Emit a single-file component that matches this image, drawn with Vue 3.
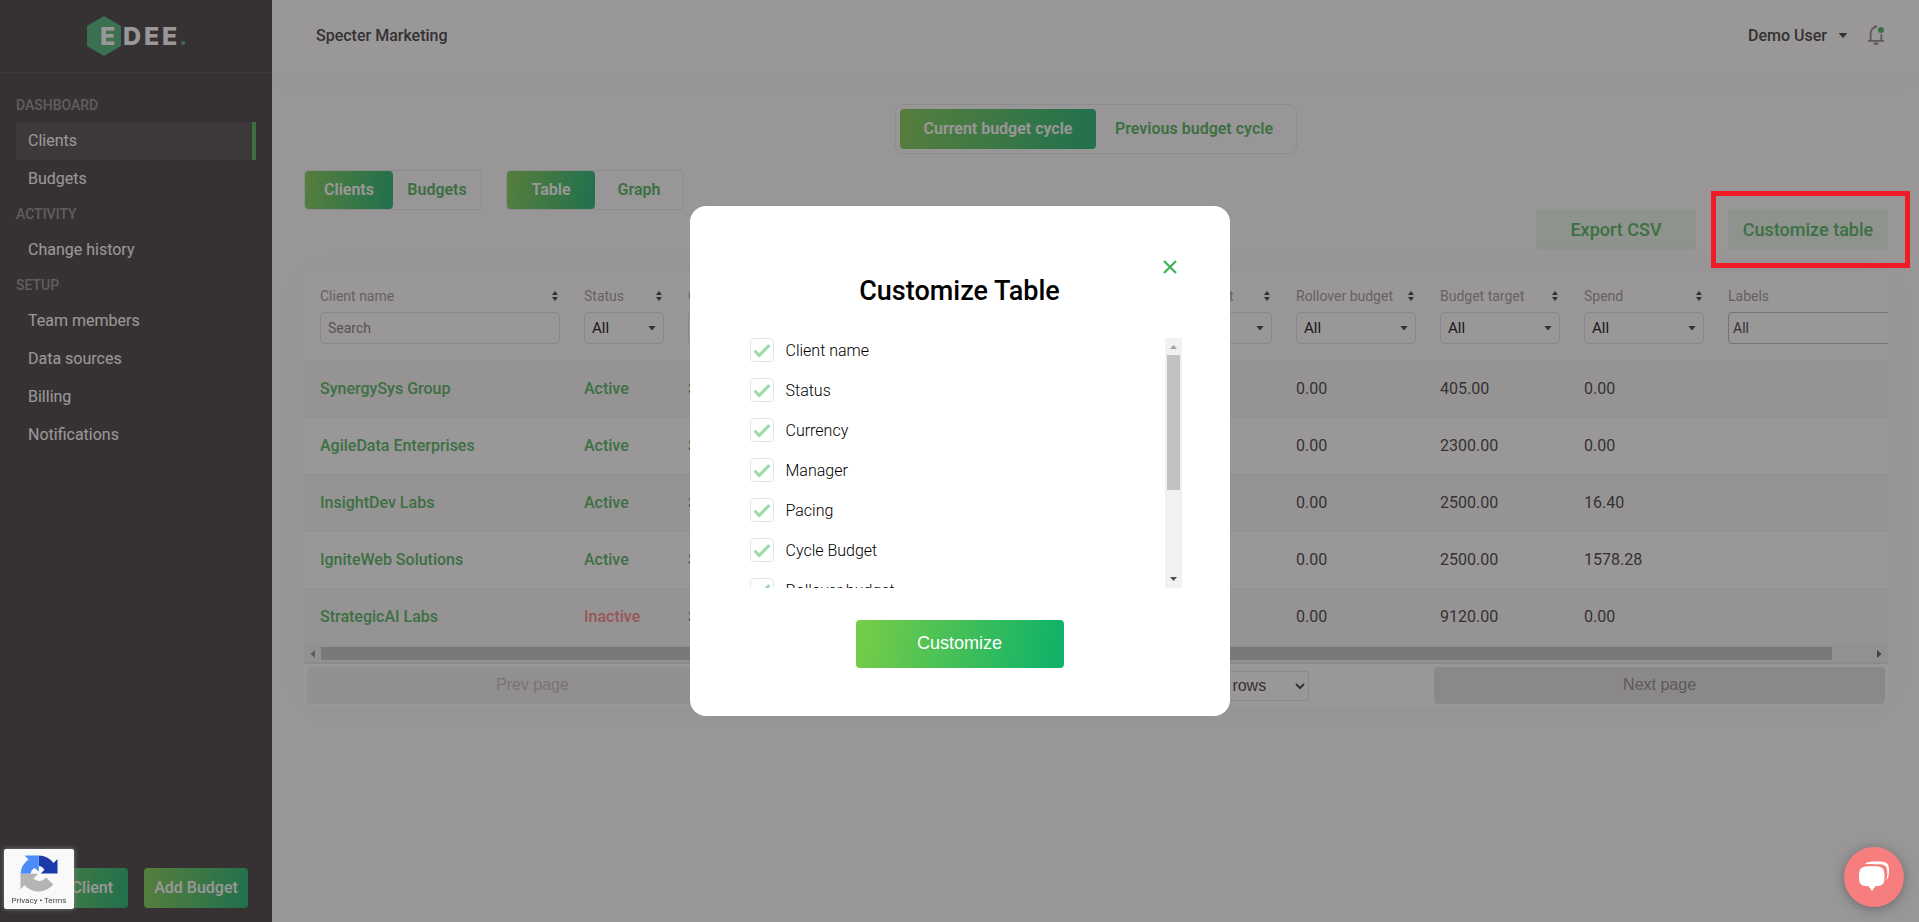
<template>
  <div class="app-shell">
    <aside class="sidebar">
      <div class="sidebar-brand">
        <svg class="brand-logo" viewBox="0 0 98 40" role="img" aria-label="EDEE.">
          <polygon points="17,0 34,10 34,30 17,40 0,30 0,10" fill="#41b36e" />
          <g fill="#ffffff" class="brand-text">
            <text x="13" y="29">E</text>
            <text x="36" y="29">D</text>
            <text x="57" y="29">E</text>
            <text x="75" y="29">E</text>
          </g>
          <circle cx="96" cy="27" r="2" fill="#41b36e" />
        </svg>
      </div>

      <nav class="sidebar-nav" aria-label="Main">
        <template v-for="group in menu" :key="group.title">
          <h2 class="nav-title">{{ group.title }}</h2>
          <a
            v-for="item in group.items"
            :key="item"
            href="#"
            class="nav-link"
            :class="{ active: item === activePage }"
            @click.prevent="activePage = item"
          >{{ item }}</a>
        </template>
      </nav>

      <div class="sidebar-actions">
        <button type="button" class="gradient-btn action-btn">Add Client</button>
        <button type="button" class="gradient-btn action-btn">Add Budget</button>
      </div>
    </aside>

    <div class="page">
      <header class="topbar">
        <span class="company">Specter Marketing</span>
        <button type="button" class="user-menu">
          Demo User
          <svg class="caret" viewBox="0 0 8 5"><path d="M0.5 0h7a.5.5 0 0 1 .3.8L4.5 4.6a.7.7 0 0 1-1 0L.2.8A.5.5 0 0 1 .5 0z" fill="#333333" /></svg>
        </button>
        <button type="button" class="bell-btn" aria-label="Notifications">
          <svg viewBox="0 0 18 20" width="18" height="20" fill="none">
            <path d="M3.6 15.2V9.6C3.6 5.6 5.4 2.6 8.8 2.2" stroke="#868484" stroke-width="1.8" />
            <path d="M14.3 9.2v6" stroke="#868484" stroke-width="1.8" />
            <path d="M1 15.9h16" stroke="#868484" stroke-width="1.8" />
            <circle cx="8.8" cy="1.6" r="1.4" fill="#868484" />
            <path d="M6.4 17.4h5a2.5 2.5 0 0 1-5 0z" fill="#868484" />
            <circle cx="14" cy="5" r="3" fill="#43b154" />
          </svg>
        </button>
      </header>

      <main class="content">
        <div class="cycle-switch">
          <button
            v-for="cycle in cycles"
            :key="cycle"
            type="button"
            class="cycle-btn"
            :class="{ selected: cycle === activeCycle }"
            @click="activeCycle = cycle"
          >{{ cycle }}</button>
        </div>

        <div class="view-row">
          <div v-for="group in viewGroups" :key="group.selected" class="view-switch">
            <button
              v-for="option in group.options"
              :key="option"
              type="button"
              class="view-btn"
              :class="{ selected: option === group.selected }"
              @click="group.selected = option"
            >{{ option }}</button>
          </div>
        </div>

        <div class="table-actions">
          <button type="button" class="soft-btn">Export CSV</button>
          <div class="highlighted">
            <button type="button" class="soft-btn" @click="isModalOpen = true">Customize table</button>
          </div>
        </div>

        <section class="table-card">
          <div class="table-scroll">
            <table class="clients-table">
              <colgroup>
                <col v-for="col in columns" :key="col.label" :class="col.size" />
              </colgroup>
              <thead>
                <tr>
                  <th v-for="col in columns" :key="col.label" scope="col">
                    <div class="th-top">
                      <label :for="col.key">{{ col.label }}</label>
                      <svg v-if="col.key !== 'labels'" class="sort-icon" viewBox="0 0 6 10">
                        <path d="M3 0l3 4H0zM3 10l3-4H0z" fill="#333333" />
                      </svg>
                    </div>
                    <input v-if="col.key === 'name'" :id="col.key" class="filter" type="text" placeholder="Search" />
                    <div v-else class="select-wrap">
                      <select :id="col.key" class="filter" :class="{ 'filter-labels': col.key === 'labels' }">
                        <option>All</option>
                      </select>
                      <svg v-if="col.key !== 'labels'" class="select-caret" viewBox="0 0 8 5"><path d="M0.3 0h7.4L4 4.6z" fill="#333333" /></svg>
                    </div>
                  </th>
                </tr>
              </thead>
              <tbody>
                <tr v-for="row in rows" :key="row.name">
                  <td><a href="#" class="client-link" @click.prevent>{{ row.name }}</a></td>
                  <td><span class="status" :class="{ inactive: row.status === 'Inactive' }">{{ row.status }}</span></td>
                  <td>$</td>
                  <td></td>
                  <td></td>
                  <td></td>
                  <td>{{ row.rollover }}</td>
                  <td>{{ row.target }}</td>
                  <td>{{ row.spend }}</td>
                  <td></td>
                </tr>
              </tbody>
            </table>
          </div>
          <div class="h-scrollbar" aria-hidden="true">
            <svg viewBox="0 0 17 17"><path d="M11 5v8L6.500 9z" fill="#8a8a8a" /></svg>
            <div class="h-track"><div class="h-thumb"></div></div>
            <svg viewBox="0 0 17 17"><path d="M6 5v8l4.500-4z" fill="#505050" /></svg>
          </div>

          <div class="pagination">
            <button type="button" class="page-btn" disabled>Prev page</button>
            <div class="page-center">
              <span>Page 1 of 2</span>
              <select class="rows-select" aria-label="Rows per page">
                <option>10 rows</option>
                <option>20 rows</option>
              </select>
            </div>
            <button type="button" class="page-btn">Next page</button>
          </div>
        </section>
      </main>
    </div>

    <div v-if="isModalOpen" class="backdrop" @click.self="isModalOpen = false">
      <div class="modal" role="dialog" aria-modal="true" aria-labelledby="modal-title">
        <button type="button" class="close-btn" aria-label="Close" @click="isModalOpen = false">
          <svg viewBox="0 0 14 14" width="14" height="14"><path d="M1 1l12 12M13 1L1 13" stroke="#43b154" stroke-width="2.200" /></svg>
        </button>
        <h1 id="modal-title" class="modal-title">Customize Table</h1>
        <div class="option-area">
          <ul class="option-list">
            <li v-for="option in tableOptions" :key="option.label">
              <label class="option">
                <input v-model="option.checked" type="checkbox" />
                {{ option.label }}
              </label>
            </li>
          </ul>
          <div class="v-scrollbar" aria-hidden="true">
            <svg viewBox="0 0 17 17"><path d="M5 11h7L8.500 7z" fill="#a3a3a3" /></svg>
            <div class="v-track"><div class="v-thumb"></div></div>
            <svg viewBox="0 0 17 17"><path d="M5 6h7l-3.500 4z" fill="#505050" /></svg>
          </div>
        </div>
        <button type="button" class="gradient-btn submit-btn" @click="isModalOpen = false">Customize</button>
      </div>
    </div>

    <div class="captcha-badge">
      <svg viewBox="0 0 38 38" width="38" height="38">
        <path d="M37.500 18.500V4l-4 4A19 19 0 0 0 18.800 0.500v10.300a8.500 8.500 0 0 1 5.700 4l-3.800 3.700z" fill="#1c3aa9" />
        <path d="M18.800 0.500H4.500l4 4A19 19 0 0 0 .500 18.700h10.200c.2-2.800 1.600-4.600 4-5.800l4.100 3.700z" fill="#4a8df6" />
        <path d="M.500 18.700v15.600l4-4a18.800 18.800 0 0 0 28.700-.9l-7.200-6.900a8.500 8.500 0 0 1-12.500 1.300l4.500-5.100z" fill="#b4b4b4" />
      </svg>
      <div class="captcha-links"><a href="#">Privacy</a> • <a href="#">Terms</a></div>
    </div>

    <button type="button" class="chat-btn" aria-label="Open chat">
      <svg viewBox="0 0 32 30" width="32" height="30">
        <path d="M7 3.200C9 .9 12 .6 19 .6c9 0 12 1.200 12 8.400 0 5-.6 8-2.700 10.300 1-3 1-5 1-8.300 0-6.300-3-7.600-10-7.700C14 3.200 11 2.900 7 3.200z" fill="#ffffff" />
        <path d="M14 5.200c10 0 12.500.8 12.500 10.300 0 7.500-1.600 9.400-9 9.800L14 30l-3.500-4.700C2.600 24.900 1 23 1 15.500 1 6 4 5.200 14 5.200z" fill="#ffffff" />
      </svg>
    </button>
  </div>
</template>

<script setup>
import { reactive, ref } from 'vue'

const isModalOpen = ref(true)
const activePage = ref('Clients')
const activeCycle = ref('Current budget cycle')

const cycles = ['Current budget cycle', 'Previous budget cycle']

const menu = [
  { title: 'DASHBOARD', items: ['Clients', 'Budgets'] },
  { title: 'ACTIVITY', items: ['Change history'] },
  { title: 'SETUP', items: ['Team members', 'Data sources', 'Billing', 'Notifications'] },
]

const viewGroups = reactive([
  { selected: 'Clients', options: ['Clients', 'Budgets'] },
  { selected: 'Table', options: ['Table', 'Graph'] },
])

const columns = [
  { key: 'name', label: 'Client name', size: 'col-name' },
  { key: 'status', label: 'Status', size: 'col-small' },
  { key: 'currency', label: 'Currency', size: 'col-small' },
  { key: 'manager', label: 'Manager', size: 'col-large' },
  { key: 'pacing', label: 'Pacing', size: 'col-medium' },
  { key: 'cycle', label: 'Cycle Budget', size: 'col-medium' },
  { key: 'rollover', label: 'Rollover budget', size: 'col-medium' },
  { key: 'target', label: 'Budget target', size: 'col-medium' },
  { key: 'spend', label: 'Spend', size: 'col-medium' },
  { key: 'labels', label: 'Labels', size: 'col-large' },
]

const rows = [
  { name: 'SynergySys Group', status: 'Active', rollover: '0.00', target: '405.00', spend: '0.00' },
  { name: 'AgileData Enterprises', status: 'Active', rollover: '0.00', target: '2300.00', spend: '0.00' },
  { name: 'InsightDev Labs', status: 'Active', rollover: '0.00', target: '2500.00', spend: '16.40' },
  { name: 'IgniteWeb Solutions', status: 'Active', rollover: '0.00', target: '2500.00', spend: '1578.28' },
  { name: 'StrategicAI Labs', status: 'Inactive', rollover: '0.00', target: '9120.00', spend: '0.00' },
]

// One option per table column
const tableOptions = reactive(columns.map(col => ({ label: col.label, checked: true })))
</script>

<style>
body {
  margin: 0;
  background: #fdfdfd;
}
</style>

<style scoped>
.app-shell {
  display: flex;
  min-height: 100vh;
  font-family: Roboto, "Liberation Sans", sans-serif;
  font-size: 16px;
  color: #333333;
}

.app-shell *,
.app-shell *::before,
.app-shell *::after {
  box-sizing: border-box;
}

button,
input,
select {
  font-family: inherit;
  font-size: inherit;
  color: inherit;
}

button {
  border: none;
  background: none;
  padding: 0 0 2px;
  cursor: pointer;
}

a {
  text-decoration: none;
}

.gradient-btn,
.selected {
  background: linear-gradient(100deg, #74cc49 4%, #12b368 94%);
  color: #ffffff;
  border-radius: 4px;
}

/* Sidebar */
.sidebar {
  width: 272px;
  flex-shrink: 0;
  display: flex;
  flex-direction: column;
  background: #373435;
}

.sidebar-brand {
  height: 73px;
  display: flex;
  align-items: center;
  justify-content: center;
  border-bottom: 1px solid #474445;
}

.brand-logo {
  width: 98px;
  height: 40px;
}

.brand-text {
  font-family: Inter, sans-serif;
  font-size: 25px;
  font-weight: 800;
}

.sidebar-nav {
  flex: 1;
  display: flex;
  flex-direction: column;
  padding: 16px;
}

.nav-title {
  margin: 0;
  font-size: 14px;
  line-height: 33px;
  font-weight: 500;
  color: #8c8a8a;
}

.nav-link {
  padding-left: 12px;
  line-height: 38px;
  color: #ffffff;
}

.nav-link.active {
  background: #454242;
  border-right: 4px solid #43b154;
}

.sidebar-actions {
  display: flex;
  gap: 16px;
  padding: 0 24px 14px;
}

.action-btn {
  flex: 1;
  height: 40px;
  font-weight: 500;
}

/* Page */
.page {
  flex: 1;
  min-width: 0;
}

.topbar {
  height: 72px;
  display: flex;
  align-items: center;
  padding: 0 34px 0 44px;
  background: #ffffff;
  box-shadow: 0 8px 32px rgba(0, 0, 0, 0.03);
  font-weight: 500;
}

.company {
  flex: 1;
  padding-bottom: 2px;
}

.user-menu {
  display: flex;
  align-items: center;
  gap: 12px;
  margin-right: 20px;
  font-weight: 500;
}

.caret {
  width: 8px;
  height: 5px;
}

.bell-btn {
  display: flex;
}

.content {
  display: flex;
  flex-direction: column;
  padding: 32px 31px 32px 32px;
}

.cycle-switch {
  align-self: center;
  display: flex;
  padding: 4px;
  border: 1px solid #e6e6e6;
  border-radius: 8px;
}

.cycle-btn {
  width: 196px;
  height: 40px;
  font-weight: 600;
  color: #43b154;
}

.view-row {
  display: flex;
  gap: 24px;
  margin-top: 16px;
}

.view-switch {
  display: flex;
  border: 1px solid #e6e6e6;
  border-radius: 4px;
}

.view-btn {
  width: 88px;
  height: 38px;
  font-weight: 600;
  color: #43b154;
}

.cycle-btn.selected,
.view-btn.selected {
  color: #ffffff;
}

.table-actions {
  display: flex;
  justify-content: flex-end;
  gap: 32px;
}

.soft-btn {
  width: 160px;
  height: 40px;
  border-radius: 4px;
  background: #e6f6e8;
  color: #43b154;
  font-size: 18px;
  font-weight: 500;
}

.highlighted {
  position: relative;
}

/* Frame that points at the button, drawn over the backdrop */
.highlighted::after {
  content: '';
  position: absolute;
  inset: -19px -22px -18px -17px;
  border: 5px solid #ee1c24;
  z-index: 20;
  pointer-events: none;
}

/* Table */
.table-card {
  margin-top: 23px;
  background: #ffffff;
  border-radius: 8px;
  box-shadow: 0 0 48px rgba(0, 0, 0, 0.04);
}

.table-scroll {
  overflow: hidden;
}

.clients-table {
  width: 1628px;
  table-layout: fixed;
  border-collapse: collapse;
}

.col-name {
  width: 268px;
}

.col-small {
  width: 104px;
}

.col-medium {
  width: 144px;
}

.col-large {
  width: 216px;
}

th,
td {
  padding: 0 12px;
  text-align: left;
  font-weight: 400;
}

th:first-child,
td:first-child {
  padding-left: 16px;
}

th {
  height: 87px;
  padding-top: 11px;
  vertical-align: top;
}

tbody tr:nth-child(odd) {
  background: #f7f7f7;
}

td {
  height: 57px;
  border-top: 1px solid #f1f1f1;
}

.th-top {
  display: flex;
  align-items: center;
  justify-content: space-between;
  height: 24px;
  margin-bottom: 4px;
  font-size: 14px;
  white-space: nowrap;
  color: #939292;
}

.sort-icon {
  width: 6px;
  height: 10px;
  margin-right: 2px;
}

.filter {
  display: block;
  width: 100%;
  height: 32px;
  padding: 0 7px;
  border: 1px solid #e0e0e0;
  border-radius: 4px;
  background: #ffffff;
  font-size: 15px;
  color: #000000;
  appearance: none;
}

input.filter {
  font-size: 14px;
}

.filter::placeholder {
  color: #757575;
}

.filter-labels {
  padding: 0 4px;
  border-color: #b6b6b6;
  color: #333333;
  font-size: 14px;
}

.select-wrap {
  position: relative;
}

.select-caret {
  position: absolute;
  right: 8px;
  top: 14px;
  width: 8px;
  height: 5px;
  pointer-events: none;
}

.client-link {
  font-weight: 500;
  color: #43b154;
}

.status {
  font-weight: 500;
  color: #43b154;
}

.status.inactive {
  color: #f67e7e;
}

.h-scrollbar {
  display: flex;
  align-items: center;
  height: 19px;
  background: #f1f1f1;
  border-bottom: 2px solid #e4e4e4;
}

.h-scrollbar svg,
.v-scrollbar svg {
  width: 17px;
  height: 17px;
  flex-shrink: 0;
}

.h-track {
  flex: 1;
}

.h-thumb {
  width: 97.5%;
  height: 13px;
  background: #c1c1c1;
}

.pagination {
  display: grid;
  grid-template-columns: 2fr 3fr 2fr;
  padding: 3px;
}

.page-btn {
  height: 37px;
  border-radius: 4px;
  background: #e1e1e1;
  color: #828282;
  font-family: "Liberation Sans", sans-serif;
}

.page-btn:disabled {
  background: #efefef;
  color: #b8b8b8;
  cursor: default;
}

.page-center {
  display: flex;
  align-items: center;
  justify-content: space-between;
  padding: 0 125px;
  font-family: "Liberation Sans", sans-serif;
}

.rows-select {
  height: 30px;
  width: 104px;
  padding: 0;
  border: 1px solid #e0e0e0;
  border-radius: 3px;
  background: #ffffff;
}

/* Modal */
.backdrop {
  position: fixed;
  inset: 0;
  display: grid;
  place-items: center;
  background: rgba(53, 48, 49, 0.5);
  z-index: 10;
}

.modal {
  position: relative;
  width: 540px;
  display: flex;
  flex-direction: column;
  padding: 64px 48px 48px 60px;
  background: #ffffff;
  border-radius: 16px;
}

.close-btn {
  position: absolute;
  top: 54px;
  right: 53px;
  display: flex;
}

.modal-title {
  margin: 0 12px 26px 0;
  text-align: center;
  font-size: 27px;
  line-height: 42px;
  font-weight: 500;
  color: #000000;
}

.option-area {
  display: flex;
  height: 250px;
}

.option-list {
  flex: 1;
  margin: 0;
  padding: 0;
  list-style: none;
  overflow: hidden;
}

.option {
  display: flex;
  align-items: center;
  gap: 12px;
  margin-bottom: 16px;
  height: 24px;
  font-weight: 300;
  color: #000000;
  cursor: pointer;
}

.option input {
  appearance: none;
  display: flex;
  justify-content: center;
  width: 24px;
  height: 24px;
  margin: 0;
  border: 1px solid #e4e4e4;
  border-radius: 4px;
}

.option input:checked::after {
  content: '';
  width: 8px;
  height: 16px;
  margin-top: 2px;
  border: solid #a0d8a8;
  border-width: 0 3px 3px 0;
  transform: rotate(45deg);
}

.v-scrollbar {
  display: flex;
  flex-direction: column;
  align-items: center;
  width: 17px;
  background: #f1f1f1;
}

.v-track {
  flex: 1;
}

.v-thumb {
  width: 13px;
  height: 135px;
  background: #c1c1c1;
}

.submit-btn {
  align-self: center;
  width: 208px;
  height: 48px;
  margin: 32px 12px 0 0;
  font-family: "Liberation Sans", sans-serif;
  font-size: 18px;
}

/* Floating widgets */
.captcha-badge {
  position: fixed;
  left: 4px;
  bottom: 13px;
  width: 70px;
  height: 60px;
  display: flex;
  flex-direction: column;
  align-items: center;
  justify-content: space-between;
  padding: 6px 0 2px;
  background: #f9f9f9;
  border-radius: 2px;
  box-shadow: 0 0 5px #808080;
  z-index: 20;
}

.captcha-links {
  font-size: 8px;
  line-height: 12px;
  white-space: nowrap;
  color: #000000;
}

.captcha-links a {
  color: #444444;
}

.chat-btn {
  position: fixed;
  right: 15px;
  bottom: 15px;
  width: 60px;
  height: 60px;
  display: grid;
  place-items: center;
  border-radius: 50%;
  background: #f67e7e;
  box-shadow: 0 2px 12px rgba(0, 0, 0, 0.3);
  z-index: 20;
}
</style>
